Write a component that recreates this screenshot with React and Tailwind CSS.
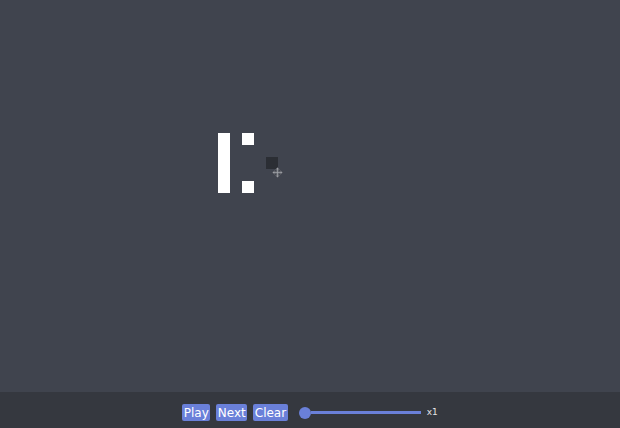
import { useState } from "react";

const CELL = 12;

// live cells as [col, row] on a 12px grid, offset to match the board
const initialCells = [
  [0, 0],
  [0, 1],
  [0, 2],
  [0, 3],
  [0, 4],
  [2, 0],
  [2, 4],
];

export default function App() {
  const [cells] = useState(initialCells);
  const [hover] = useState([4, 2]);
  const originX = 218;
  const originY = 133;

  return (
    <div className="w-[620px] h-[428px] flex flex-col bg-[#40444e] overflow-hidden" style={{ fontFamily: '"DejaVu Sans", sans-serif' }}>
      <div className="relative flex-1">
        {cells.map(([c, r]) => (
          <div
            key={`${c}-${r}`}
            className="absolute w-3 h-3 bg-white"
            style={{ left: originX + c * CELL, top: originY + r * CELL }}
          />
        ))}
        <div
          className="absolute w-3 h-3 bg-[#2b2e34]"
          style={{ left: originX + hover[0] * CELL, top: originY + hover[1] * CELL }}
        />
        <svg className="absolute left-[272px] top-[167px]" width="11" height="11" viewBox="0 0 11 11">
          <path d="M5.5 0.5 L7.5 2.5 H6.3 V4.7 H8.5 V3.5 L10.5 5.5 L8.5 7.5 V6.3 H6.3 V8.5 H7.5 L5.5 10.5 L3.5 8.5 H4.7 V6.3 H2.5 V7.5 L0.5 5.5 L2.5 3.5 V4.7 H4.7 V2.5 H3.5 Z" fill="#9a9da3" stroke="#5a5d63" strokeWidth="0.6" />
        </svg>
      </div>

      <div className="h-9 bg-[#35383f] flex items-start justify-center pt-3">
        <div className="flex items-center gap-[6px]">
          <button className="h-[17px] px-[1.5px] rounded-[2px] bg-[#6a80d9] text-white text-[12px] leading-none">Play</button>
          <button className="h-[17px] px-[1.5px] rounded-[2px] bg-[#6a80d9] text-white text-[12px] leading-none">Next</button>
          <button className="h-[17px] px-[1.5px] rounded-[2px] bg-[#6a80d9] text-white text-[12px] leading-none">Clear</button>
        </div>
        <div className="ml-[11px] h-[17px] w-[122px] flex items-center">
          <div className="w-3 h-3 rounded-full bg-[#6a80d9] shrink-0" />
          <div className="flex-1 h-[3px] bg-[#6a80d9]" />
        </div>
        <span className="ml-[6px] h-[17px] flex items-center text-[9px] text-[#e4e4e4]">x1</span>
      </div>
    </div>
  );
}
